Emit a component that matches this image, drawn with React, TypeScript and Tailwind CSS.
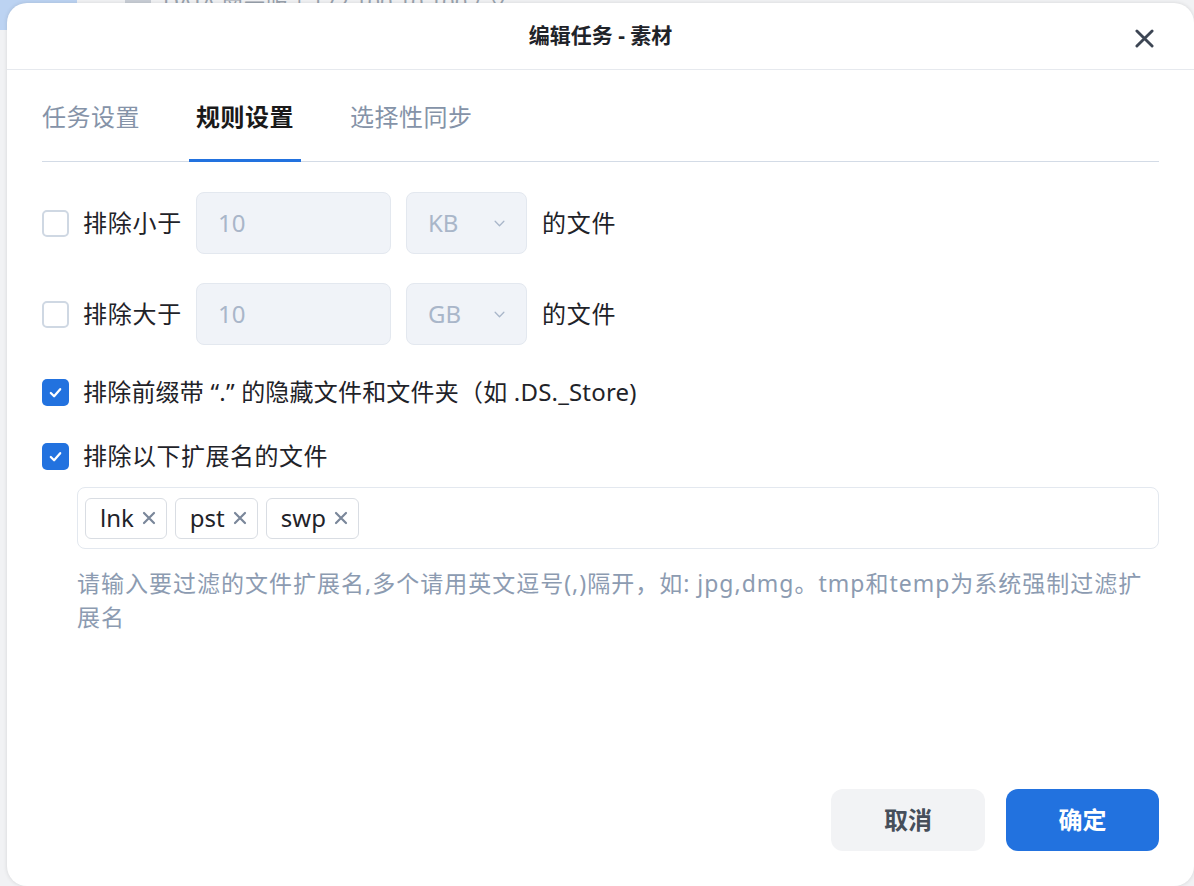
import React, { useState } from "react";

const font = "font-['Noto_Sans','Noto_Sans_CJK_SC',sans-serif]";

const CloseIcon = ({ className }: { className?: string }) => (
  <svg viewBox="0 0 20 20" className={className} fill="none" stroke="currentColor" strokeLinecap="round">
    <path d="M2 2 L18 18 M18 2 L2 18" strokeWidth="3" />
  </svg>
);

const TagX = () => (
  <svg viewBox="0 0 14 14" className="w-[14px] h-[14px]" fill="none" stroke="currentColor" strokeLinecap="round">
    <path d="M2 2 L12 12 M12 2 L2 12" strokeWidth="2.2" />
  </svg>
);

const Chevron = () => (
  <svg viewBox="0 0 12 8" className="w-[11px] h-[7px]" fill="none" stroke="currentColor" strokeLinecap="round" strokeLinejoin="round">
    <path d="M1 1.5 L6 6.5 L11 1.5" strokeWidth="1.5" />
  </svg>
);

const Checkbox = ({ checked, onClick }: { checked: boolean; onClick: () => void }) => (
  <button
    onClick={onClick}
    className={
      checked
        ? "w-[27px] h-[27px] rounded-[5px] bg-[#2272df] flex items-center justify-center shrink-0"
        : "w-[27px] h-[27px] rounded-[5px] border-2 border-[#cfd8e3] bg-white shrink-0"
    }
  >
    {checked && (
      <svg viewBox="0 0 16 16" className="w-[15px] h-[15px]" fill="none" stroke="white" strokeLinecap="round" strokeLinejoin="round">
        <path d="M3 8.5 L6.5 12 L13 4.5" strokeWidth="2.4" />
      </svg>
    )}
  </button>
);

const SizeRule = ({ label, unit }: { label: string; unit: string }) => {
  const [on, setOn] = useState(false);
  return (
    <div className="flex items-center h-[62px]">
      <Checkbox checked={on} onClick={() => setOn(!on)} />
      <span className="ml-[14px] text-[24px] tracking-[0.75px] text-[#1f2329]">{label}</span>
      <div className="ml-[14px] w-[195px] h-[62px] rounded-[8px] border border-[#e3e8ef] bg-[#f0f3f8] flex items-center px-[21px] text-[24px] text-[#a9b6c9]">
        10
      </div>
      <div className="ml-[15px] w-[121px] h-[62px] rounded-[8px] border border-[#e3e8ef] bg-[#f0f3f8] flex items-center justify-between pl-[21px] pr-[21px] text-[24px] text-[#a9b6c9]">
        <span>{unit}</span>
        <Chevron />
      </div>
      <span className="ml-[15px] text-[24px] tracking-[0.75px] text-[#1f2329]">的文件</span>
    </div>
  );
};

const tabs = ["任务设置", "规则设置", "选择性同步"];

export default function App() {
  const [tab, setTab] = useState(1);
  const [hidden, setHidden] = useState(true);
  const [ext, setExt] = useState(true);
  const [tags, setTags] = useState(["lnk", "pst", "swp"]);

  return (
    <div className={`${font} relative w-[1194px] h-[886px] overflow-hidden bg-[#f1f2f4]`}>
      {/* page behind the modal */}
      <div className="absolute left-0 top-0 w-[77px] h-[30px] bg-[#bcd3f2]" />
      <div className="absolute left-[125px] top-[-14px] flex items-center gap-3 text-[22px] text-[#9aa3ae]">
        <div className="w-[26px] h-[22px] rounded-[4px] bg-[#c9ced6]" />
        <span>DATA 南宁服 | 172.100.10.100 / 文</span>
      </div>

      {/* dialog */}
      <div className="absolute left-[7px] top-[3px] w-[1187px] h-[883px] bg-white rounded-[20px] shadow-[0_0_4px_rgba(0,0,0,0.12)] flex flex-col">
        <div className="relative h-[67px] border-b border-[#e6e9ee] flex items-center justify-center shrink-0">
          <span className="text-[21px] font-bold text-[#1f2329]">编辑任务 - 素材</span>
          <button className="absolute right-[40px] top-[26px] text-[#3d4654]">
            <CloseIcon className="w-[19px] h-[19px]" />
          </button>
        </div>

        <div className="px-[35px] flex flex-col flex-1">
          <div className="border-b border-[#d3dbe6] pt-[30px]">
            <div className="flex gap-[42px] -ml-[7px]">
              {tabs.map((t, i) => (
                <button
                  key={t}
                  onClick={() => setTab(i)}
                  className={
                    i === tab
                      ? "px-[7px] pb-[25px] leading-[34px] text-[24px] tracking-[0.5px] font-bold text-[#1a1a1a] border-b-[3px] border-[#2272df] -mb-px"
                      : "px-[7px] pb-[25px] leading-[34px] text-[24px] tracking-[0.5px] text-[#8593a8] border-b-[3px] border-transparent -mb-px"
                  }
                >
                  {t}
                </button>
              ))}
            </div>
          </div>

          <div className="mt-[30px] flex flex-col gap-[29px]">
            <SizeRule label="排除小于" unit="KB" />
            <SizeRule label="排除大于" unit="GB" />
          </div>

          <div className="mt-[30px] flex items-center h-[34px]">
            <Checkbox checked={hidden} onClick={() => setHidden(!hidden)} />
            <span className="ml-[14px] text-[24px] tracking-[0.2px] text-[#1f2329]">排除前缀带 “.” 的隐藏文件和文件夹（如 .DS._Store)</span>
          </div>

          <div className="mt-[30px] flex items-center h-[34px]">
            <Checkbox checked={ext} onClick={() => setExt(!ext)} />
            <span className="ml-[14px] text-[24px] tracking-[0.5px] text-[#1f2329]">排除以下扩展名的文件</span>
          </div>

          <div className="ml-[35px] mt-[14px] h-[62px] rounded-[8px] border border-[#e3e8ef] flex items-center gap-[8px] px-[7px]">
            {tags.map((t) => (
              <div
                key={t}
                className="h-[41px] rounded-[6px] border border-[#d9dde3] flex items-center gap-[8px] pl-[14px] pr-[10px] text-[24px] text-[#1f2329]"
              >
                <span>{t}</span>
                <button className="text-[#7a879a]" onClick={() => setTags(tags.filter((x) => x !== t))}>
                  <TagX />
                </button>
              </div>
            ))}
          </div>

          <p className="ml-[35px] mt-[17px] text-[23px] tracking-[1px] leading-[34px] text-[#8c9bb1]">
            请输入要过滤的文件扩展名,多个请用英文逗号(,)隔开，如: jpg,dmg。tmp和temp为系统强制过滤扩展名
          </p>

          <div className="mt-auto mb-[35px] flex justify-end gap-[21px]">
            <button className="w-[154px] h-[62px] rounded-[12px] bg-[#f2f3f5] text-[24px] font-bold text-[#464e5a]">取消</button>
            <button className="w-[153px] h-[62px] rounded-[12px] bg-[#2272df] text-[24px] font-bold text-white">确定</button>
          </div>
        </div>
      </div>
    </div>
  );
}
